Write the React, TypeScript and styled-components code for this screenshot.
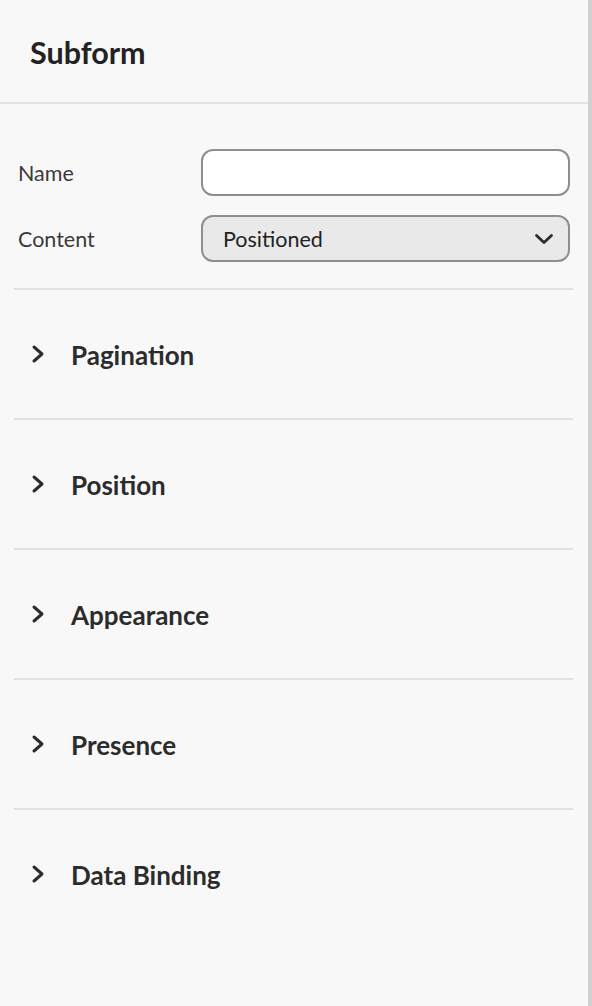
import styled, { createGlobalStyle } from 'styled-components'

const GlobalStyle = createGlobalStyle`
  html, body {
    margin: 0;
    padding: 0;
    background: #f8f8f8;
  }
  body {
    font-family: 'Lato', 'Open Sans', sans-serif;
    color: #2c2c2c;
  }
`

const sections = ['Pagination', 'Position', 'Appearance', 'Presence', 'Data Binding']

const Chevron = () => (
  <svg width="16" height="20" viewBox="0 0 16 20" fill="none">
    <path d="M4 3 L12 10 L4 17" stroke="#2c2c2c" strokeWidth="3" strokeLinecap="round" strokeLinejoin="round" />
  </svg>
)

const DownChevron = () => (
  <svg width="20" height="14" viewBox="0 0 20 14" fill="none">
    <path d="M2.5 3.5 L10 10.5 L17.5 3.5" stroke="#2c2c2c" strokeWidth="2.8" strokeLinecap="round" strokeLinejoin="round" />
  </svg>
)

export default function App() {
  return (
    <>
      <GlobalStyle />
      <Panel>
        <Header>
          <Title>Subform</Title>
        </Header>

        <Body>
          <Fields>
            <FieldRow>
              <Label>Name</Label>
              <TextInput />
            </FieldRow>
            <FieldRow>
              <Label>Content</Label>
              <Select>
                <span>Positioned</span>
                <DownChevron />
              </Select>
            </FieldRow>
          </Fields>

          {sections.map((s, i) => (
            <Section key={s} last={i === sections.length - 1}>
              <ChevronWrap>
                <Chevron />
              </ChevronWrap>
              <SectionTitle>{s}</SectionTitle>
            </Section>
          ))}
        </Body>
      </Panel>
    </>
  )
}

const Panel = styled.div`
  width: 588px;
  height: 1006px;
  background: #f8f8f8;
  border-right: 4px solid #d0d0d0;
  display: flex;
  flex-direction: column;
`

const Header = styled.div`
  height: 104px;
  border-bottom: 2px solid #e1e1e1;
  display: flex;
  align-items: center;
  padding-left: 30px;
  box-sizing: border-box;
`

const Title = styled.h1`
  margin: 0;
  font-size: 30.5px;
  font-weight: 700;
  color: #222;
  padding-top: 2px;
`

const Body = styled.div`
  padding: 0 15px 0 14px;
`

const Fields = styled.div`
  display: flex;
  flex-direction: column;
  gap: 19px;
  padding: 45px 0 26px;
  border-bottom: 2px solid #e1e1e1;
`

const FieldRow = styled.div`
  display: grid;
  grid-template-columns: 187px 1fr;
  align-items: center;
`

const Label = styled.div`
  font-size: 21.5px;
  color: #3a3a3a;
  padding-left: 4px;
  padding-top: 1px;
`

const fieldBase = `
  box-sizing: border-box;
  height: 47px;
  width: 369px;
  border: 2px solid #8e8e8e;
  border-radius: 12px;
`

const TextInput = styled.div`
  ${fieldBase}
  background: #ffffff;
`

const Select = styled.div`
  ${fieldBase}
  background: #e9e9e9;
  display: flex;
  align-items: center;
  justify-content: space-between;
  padding: 1px 14px 0 20px;
  font-size: 21.5px;
  color: #222;
`

const Section = styled.div<{ last?: boolean }>`
  height: 128px;
  display: flex;
  align-items: center;
  border-bottom: ${p => (p.last ? 'none' : '2px solid #e1e1e1')};
`

const ChevronWrap = styled.div`
  width: 57px;
  padding-left: 16px;
  box-sizing: border-box;
  display: flex;
  align-items: center;
`

const SectionTitle = styled.div`
  font-size: 26px;
  font-weight: 700;
  color: #2c2c2c;
  padding-top: 2px;
`
